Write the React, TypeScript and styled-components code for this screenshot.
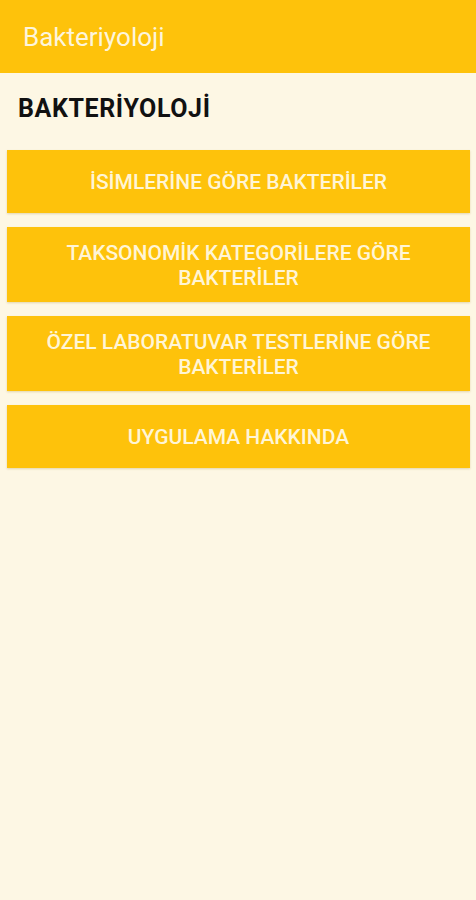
import styled, { createGlobalStyle } from 'styled-components';

const GlobalStyle = createGlobalStyle`
  html, body {
    margin: 0;
    padding: 0;
    background: #fdf7e4;
  }
  body {
    font-family: Roboto, "Noto Sans", sans-serif;
  }
`;

const Screen = styled.div`
  min-height: 900px;
  background: #fdf7e4;
  display: flex;
  flex-direction: column;
`;

const AppBar = styled.header`
  height: 73px;
  background: #fec20b;
  display: flex;
  align-items: center;
  padding: 0 23px;
  box-sizing: border-box;
`;

const AppTitle = styled.h1`
  margin: 0;
  font-size: 26px;
  font-weight: 400;
  color: #fdf5dc;
`;

const Content = styled.main`
  display: flex;
  flex-direction: column;
  padding: 0 6px 0 7px;
`;

const Heading = styled.h2`
  margin: 20px 0 0 11px;
  height: 57px;
  font-size: 25px;
  font-weight: 700;
  letter-spacing: 0.6px;
  color: #111;
  line-height: 32px;
`;

const MenuList = styled.nav`
  display: flex;
  flex-direction: column;
  gap: 14px;
`;

const MenuButton = styled.button<{ $tall?: boolean }>`
  height: ${p => (p.$tall ? 75 : 63)}px;
  border: none;
  background: #fec20b;
  color: #fff5d6;
  font-family: Roboto, "Noto Sans", sans-serif;
  font-size: 21px;
  font-weight: 500;
  line-height: 25px;
  text-align: center;
  padding: 2px 30px 0;
  box-shadow: 0 1px 2px rgba(150, 110, 0, 0.25);
  cursor: pointer;
`;

const items = [
  { label: 'İSİMLERİNE GÖRE BAKTERİLER', tall: false },
  { label: 'TAKSONOMİK KATEGORİLERE GÖRE BAKTERİLER', tall: true },
  { label: 'ÖZEL LABORATUVAR TESTLERİNE GÖRE BAKTERİLER', tall: true },
  { label: 'UYGULAMA HAKKINDA', tall: false },
];

export default function App() {
  return (
    <Screen>
      <GlobalStyle />
      <AppBar>
        <AppTitle>Bakteriyoloji</AppTitle>
      </AppBar>
      <Content>
        <Heading>BAKTERİYOLOJİ</Heading>
        <MenuList>
          {items.map(item => (
            <MenuButton key={item.label} $tall={item.tall}>
              {item.label}
            </MenuButton>
          ))}
        </MenuList>
      </Content>
    </Screen>
  );
}
